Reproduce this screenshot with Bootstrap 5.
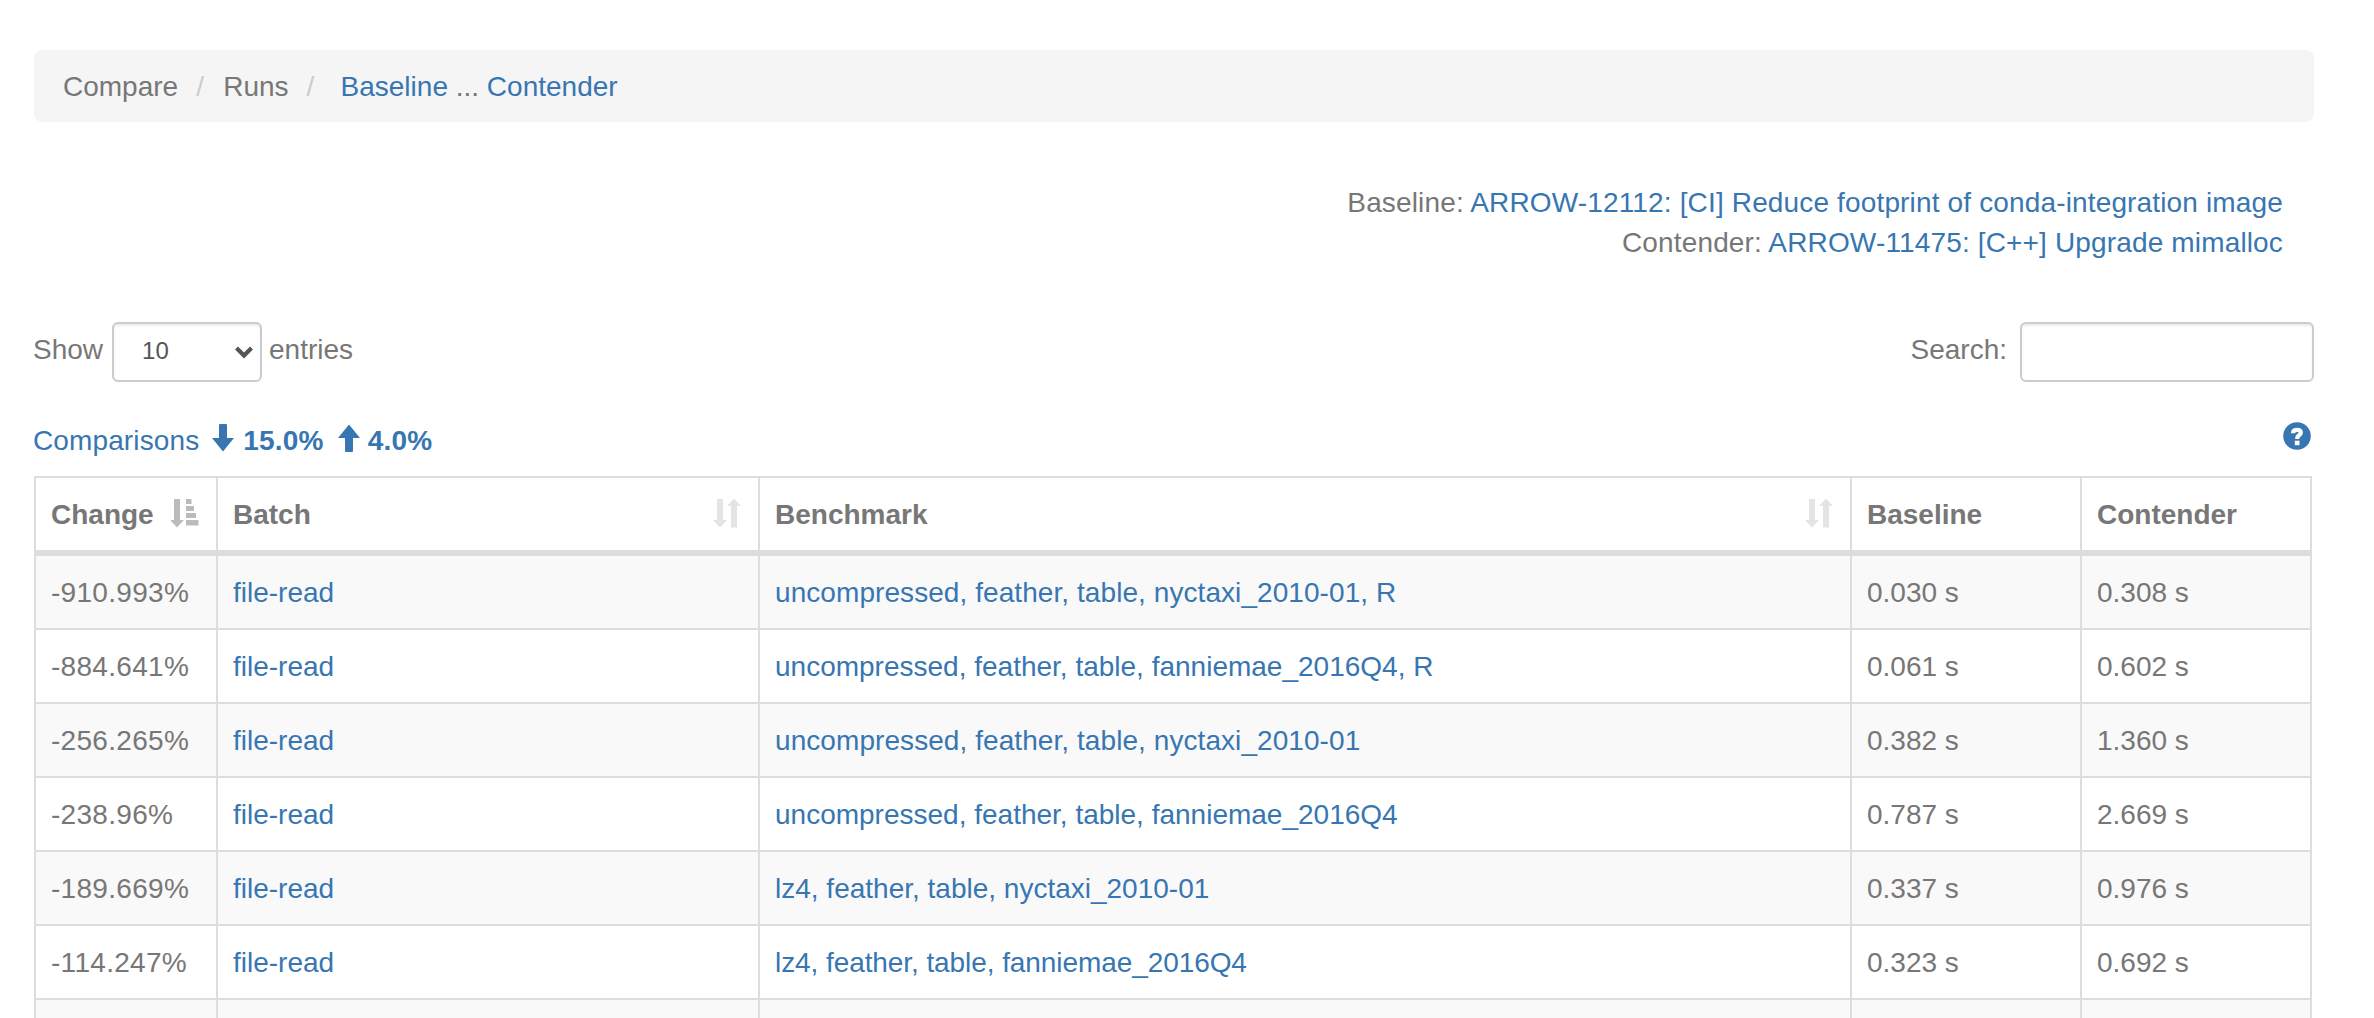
<!DOCTYPE html>
<html lang="en">
<head>
<meta charset="utf-8">
<title>Compare Runs</title>
<link href="https://cdn.jsdelivr.net/npm/bootstrap@5.3.0/dist/css/bootstrap.min.css" rel="stylesheet">
<style>
body{font-family:"Liberation Sans",Arial,sans-serif;font-size:28px;line-height:40px;color:#777;background:#fff;width:2374px;height:1018px;overflow:hidden}
a{color:#3876b2;text-decoration:none}
.page-wrap{padding:50px 60px 0 34px;height:1018px;overflow:hidden}
.crumb-bar{background:#f5f5f5;border-radius:8px;padding:17px 29px 15px;height:72px;white-space:pre}
.crumb-bar .slash{color:#ccc;display:inline-block;width:45px;padding-left:18px}
.crumb-bar .trail{margin-left:7px}
.run-info{padding:61px 31px 0 0;height:200px;letter-spacing:.15px}
.box{height:60px;border:2px solid #ccc;border-radius:6px;background:#fff;box-shadow:inset 0 2px 2px rgba(0,0,0,.075)}
.len-box{width:150px;color:#555;font-size:24px;padding:0 6px 0 28px;margin:0 7px 0 9px}
.len-box span{margin-top:-2px}
.search-box{width:294px;margin-left:13px;padding:0}
.controls{height:60px}
.controls .txt{margin-top:-5px}
.show-len{margin-left:-1px}
.cap-row{height:94px;padding-top:39px;padding-right:3px}
.cap-row b{font-weight:700;letter-spacing:.2px}
.cap-row .caption-link{margin-left:-1px;letter-spacing:.12px}
.ico-down{margin:3px 9px 0 13px}
.ico-up{margin:3px 8px 0 14px}
.runs-table{width:2278px;table-layout:fixed;border-collapse:separate;border-spacing:0;border-left:2px solid #ddd;border-top:2px solid #ddd;color:#777;--bs-table-color:#777;--bs-table-striped-color:#777;--bs-table-striped-bg:#f9f9f9;margin:0}
.runs-table>:not(caption)>*>*{padding:17px 17px 15px 15px;border:0 solid #ddd;border-width:0 2px 2px 0;height:74px;white-space:nowrap}
.runs-table>thead>tr>th{border-bottom-width:6px;height:78px}
.runs-table td:first-child{letter-spacing:.3px}
.runs-table th svg{margin-top:3px}
.wide a{letter-spacing:.07px}
.tight a{letter-spacing:-.08px}
svg{display:block;flex:none}
</style>
<script src="https://cdn.jsdelivr.net/npm/bootstrap@5.3.0/dist/js/bootstrap.bundle.min.js"></script>
</head>
<body>
<div class="page-wrap">
<nav class="crumb-bar d-flex"><span>Compare</span><span class="slash">/</span><span>Runs</span><span class="slash">/</span><span class="trail"><a href="#">Baseline</a> ... <a href="#">Contender</a></span></nav>
<div class="run-info text-end">
<div>Baseline: <a href="#">ARROW-12112: [CI] Reduce footprint of conda-integration image</a></div>
<div>Contender: <a href="#">ARROW-11475: [C++] Upgrade mimalloc</a></div>
</div>
<div class="controls d-flex justify-content-between">
<div class="show-len d-flex align-items-center"><span class="txt">Show</span><div class="box len-box d-flex align-items-center justify-content-between"><span>10</span><svg width="20" height="14" viewBox="0 0 20 14"><path d="M2.500 3 10 10.500 17.500 3" fill="none" stroke="#555" stroke-width="4.200"/></svg></div><span class="txt">entries</span></div>
<div class="d-flex align-items-center"><span class="txt">Search:</span><input class="box search-box" aria-label="Search"></div>
</div>
<div class="cap-row d-flex justify-content-between align-items-start">
<a href="#" class="caption-link d-flex align-items-start"><span>Comparisons</span>
<svg class="ico-down" width="22" height="28" viewBox="0 0 22 28"><path d="M8 0h6q1 0 1 1v13h7L11 27.500 0 14h7V1q0-1 1-1Z" fill="#3876b2"/></svg><b>15.0%</b>
<svg class="ico-up" width="22" height="28" viewBox="0 0 22 28"><path d="M11 .5 22 14h-7v13q0 1-1 1H8q-1 0-1-1V14H0Z" fill="#3876b2"/></svg><b>4.0%</b></a>
<a href="#" aria-label="Help"><svg class="mt-0" style="margin-top:1px!important" width="28" height="28" viewBox="0 0 28 28"><circle cx="14" cy="14" r="13.800" fill="#3876b2"/><path d="M10 11.200q.1-3.300 4.100-3.300 3.700 0 3.700 2.800 0 1.500-1.700 2.500-1.900 1.100-1.900 3.800" fill="none" stroke="#fff" stroke-width="4.200"/><path d="M11.800 18.700h4.700v4.500h-4.700z" fill="#fff"/></svg></a>
</div>
<table class="table table-striped runs-table">
<colgroup><col style="width:182px"><col style="width:542px"><col style="width:1092px"><col style="width:230px"><col style="width:230px"></colgroup>
<thead><tr>
<th><div class="d-flex justify-content-between"><span>Change</span><svg width="28" height="30" viewBox="0 0 28 30" fill="#bbb"><path d="M3 1h6v21h4L6 29.500-1 22h4zM15 1h5.500v5H15zM15 8h8v5h-8zM15 15h10v5H15zM15 22h12.500v5.500H15z"/></svg></div></th>
<th><div class="d-flex justify-content-between"><span>Batch</span><svg width="28" height="30" viewBox="0 0 28 30" fill="#e4e4e4"><path d="M4 1h6v21h4L7 29.500 0 22h4zM18 29.500h6V8h4L21 .5 14 8h4z"/></svg></div></th>
<th><div class="d-flex justify-content-between"><span>Benchmark</span><svg width="28" height="30" viewBox="0 0 28 30" fill="#e4e4e4"><path d="M4 1h6v21h4L7 29.500 0 22h4zM18 29.500h6V8h4L21 .5 14 8h4z"/></svg></div></th>
<th>Baseline</th><th>Contender</th></tr></thead>
<tbody>
<tr><td>-910.993%</td><td><a href="#">file-read</a></td><td class="wide"><a href="#">uncompressed, feather, table, nyctaxi_2010-01, R</a></td><td>0.030 s</td><td>0.308 s</td></tr>
<tr><td>-884.641%</td><td><a href="#">file-read</a></td><td><a href="#">uncompressed, feather, table, fanniemae_2016Q4, R</a></td><td>0.061 s</td><td>0.602 s</td></tr>
<tr><td>-256.265%</td><td><a href="#">file-read</a></td><td class="wide"><a href="#">uncompressed, feather, table, nyctaxi_2010-01</a></td><td>0.382 s</td><td>1.360 s</td></tr>
<tr><td>-238.96%</td><td><a href="#">file-read</a></td><td><a href="#">uncompressed, feather, table, fanniemae_2016Q4</a></td><td>0.787 s</td><td>2.669 s</td></tr>
<tr><td>-189.669%</td><td><a href="#">file-read</a></td><td><a href="#">lz4, feather, table, nyctaxi_2010-01</a></td><td>0.337 s</td><td>0.976 s</td></tr>
<tr><td>-114.247%</td><td><a href="#">file-read</a></td><td class="tight"><a href="#">lz4, feather, table, fanniemae_2016Q4</a></td><td>0.323 s</td><td>0.692 s</td></tr>
<tr><td></td><td></td><td></td><td></td><td></td></tr>
</tbody>
</table>
</div>
</body>
</html>
